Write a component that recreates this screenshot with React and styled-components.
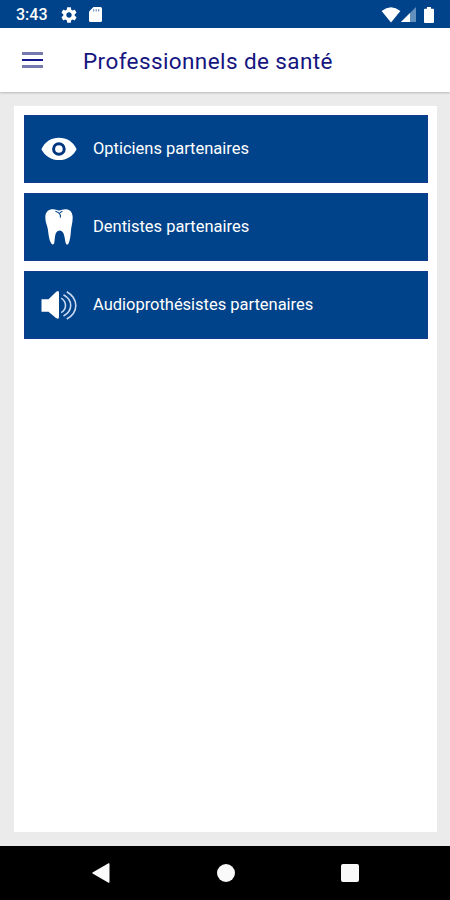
import React from 'react'
import styled, { createGlobalStyle } from 'styled-components'

const GlobalStyle = createGlobalStyle`
  * {
    box-sizing: border-box;
  }

  body {
    margin: 0;
    font-family: Roboto, "Liberation Sans", sans-serif;
  }
`

const GearIcon = () => (
  <svg width="16" height="16" viewBox="2 2 20 20" fill="#fff">
    <path d="M19.14 12.94c.04-.3.06-.61.06-.94 0-.32-.02-.64-.07-.94l2.03-1.58c.18-.14.23-.41.12-.61l-1.92-3.32c-.12-.22-.37-.29-.59-.22l-2.39.96c-.5-.38-1.03-.7-1.62-.94l-.36-2.54c-.04-.24-.24-.41-.48-.41h-3.84c-.24 0-.43.17-.47.41l-.36 2.54c-.59.24-1.13.57-1.62.94l-2.39-.96c-.22-.08-.47 0-.59.22L2.74 8.87c-.12.21-.08.47.12.61l2.03 1.58c-.05.3-.09.63-.09.94s.02.64.07.94l-2.03 1.58c-.18.14-.23.41-.12.61l1.92 3.32c.12.22.37.29.59.22l2.39-.96c.5.38 1.03.7 1.62.94l.36 2.54c.05.24.24.41.48.41h3.84c.24 0 .44-.17.47-.41l.36-2.54c.59-.24 1.13-.56 1.62-.94l2.39.96c.22.08.47 0 .59-.22l1.92-3.32c.12-.22.07-.47-.12-.61l-2.01-1.58zM12 15.4c-1.88 0-3.4-1.52-3.4-3.4s1.52-3.4 3.4-3.4 3.4 1.52 3.4 3.4-1.52 3.4-3.4 3.4z" />
  </svg>
)

const CardIcon = () => (
  <svg width="13" height="15" viewBox="0 0 13 15">
    <path d="M4.5 0H11.5Q13 0 13 1.5V13.5Q13 15 11.5 15H1.5Q0 15 0 13.5V4.5Z" fill="#fff" />
    <path d="M4.7 2.1V4.6M7.2 2.1V4.6M9.7 2.1V4.6" stroke="#5c86b5" strokeWidth="1" />
  </svg>
)

const WifiIcon = () => (
  <svg width="20" height="16" viewBox="0 0 20 16">
    <path d="M0.6 4Q10 -3.4 19.4 4L10 15.4Z" fill="#fff" />
  </svg>
)

const SignalIcon = () => (
  <svg width="15" height="15" viewBox="0 0 15 15">
    <path d="M15 0V15H0Z" fill="#6490bd" />
    <path d="M9 6V15H0Z" fill="#fff" />
  </svg>
)

const BatteryIcon = () => (
  <svg width="10" height="16" viewBox="0 0 10 16">
    <path d="M3 0H7V1.8H9Q10 1.8 10 2.8V15Q10 16 9 16H1Q0 16 0 15V2.8Q0 1.8 1 1.8H3Z" fill="#fff" />
  </svg>
)

const EyeIcon = () => (
  <svg width="36" height="36" viewBox="0 0 36 36">
    <path d="M0.4 18.2C4 10.5 10.5 6.8 18 6.8S32 10.5 35.6 18.2C32 25.4 25.5 29 18 29S4 25.4 0.4 18.2Z" fill="#fff" />
    <circle cx="17.9" cy="18" r="5.3" fill="#fff" stroke="#00367f" strokeWidth="3" />
  </svg>
)

const ToothIcon = () => (
  <svg width="36" height="36" viewBox="0 0 36 36">
    <path
      d="M4.3 8C4.5 2.5 8 0.2 12 0.3C14.5 0.3 16 1.5 18 1.5C20.5 1.3 22 0 25 0.2C29.5 0.5 31.7 4 31.7 8.5C31.7 14 30.3 17 30 21C29.6 26 29.2 31.5 27.3 35C26.5 36 25.2 35.6 24.7 34C23.5 29.5 23.7 22 18.8 21.4C13 21.6 14.3 30 13.2 34C12.7 35.7 11.4 36 10.5 34.7C8 31.2 7.6 25.5 6.8 20C6.2 16 4.2 13 4.3 8Z"
      fill="#fff"
    />
    <path d="M14.4 2.2C17.5 3.2 20.4 4.6 19.3 8.6M18.7 3.9L21.4 2.3" fill="none" stroke="#00438a" strokeWidth="1.1" />
  </svg>
)

const SpeakerIcon = () => (
  <svg width="36" height="36" viewBox="0 0 36 36">
    <path d="M0.5 12.2H7.5L15 5Q18 2.8 18 6V30Q18 33 15 31L7.5 24.7H0.5Z" fill="#fff" />
    <g fill="none" stroke="#c7d8f2" strokeWidth="1.6">
      <path d="M20.2 11.2Q24.5 14 24.5 18.4T20.2 25.6" />
      <path d="M22.5 7.8Q29.7 12 29.7 18.4T22.5 29" />
      <path d="M25.8 4.7Q34.8 10 34.8 18.4T25.8 32" />
    </g>
  </svg>
)

const BackIcon = () => (
  <svg width="18" height="20" viewBox="0 0 18 20">
    <path d="M0.5 9.5Q0 10 0.5 10.5L16.5 19.7Q17.5 20 17.5 19V1Q17.5 0 16.5 0.3Z" fill="#fafafa" />
  </svg>
)

const items = [
  { label: 'Opticiens partenaires', Icon: EyeIcon, spacing: '-0.02px' },
  { label: 'Dentistes partenaires', Icon: ToothIcon, spacing: '-0.02px' },
  { label: 'Audioprothésistes partenaires', Icon: SpeakerIcon, spacing: '-0.02px' },
]

export default function App() {
  return (
    <>
      <GlobalStyle />
      <Screen>
        <StatusBar>
          <Time>3:43</Time>
          <GearIcon />
          <CardIcon />
          <StatusRight>
            <WifiIcon />
            <SignalIcon />
            <BatteryIcon />
          </StatusRight>
        </StatusBar>

        <Header>
          <MenuButton aria-label="Menu">
            <MenuLine $color="#7679ae" />
            <MenuLine $color="#14148c" $thin />
            <MenuLine $color="#7679ae" />
          </MenuButton>
          <Title>Professionnels de santé</Title>
        </Header>

        <Content>
          <Panel>
            {items.map(({ label, Icon, spacing }) => (
              <Item key={label}>
                <Icon />
                <Label $spacing={spacing}>{label}</Label>
              </Item>
            ))}
          </Panel>
        </Content>

        <NavBar>
          <BackIcon />
          <Home />
          <Recent />
        </NavBar>
      </Screen>
    </>
  )
}

const Screen = styled.div`
  width: 450px;
  height: 900px;
  display: flex;
  flex-direction: column;
  overflow: hidden;
  background: #ebebeb;
`

const StatusBar = styled.div`
  height: 28px;
  display: flex;
  align-items: center;
  padding: 1px 16px 0 16px;
  background: #00438a;

  svg {
    flex: none;
  }

  svg + svg {
    margin-left: 12px;
  }
`

const Time = styled.span`
  width: 45px;
  color: #fff;
  font-size: 16px;
  font-weight: 500;
  line-height: 20px;
`

const StatusRight = styled.div`
  display: flex;
  align-items: center;
  margin-left: auto;

  svg + svg {
    margin-left: 0;
  }

  svg:last-child {
    margin-left: 8px;
  }
`

const Header = styled.header`
  height: 64px;
  flex: none;
  display: flex;
  align-items: center;
  padding: 2px 22px 0;
  background: #fff;
  box-shadow: 0 1px 2px rgba(0, 0, 0, 0.22);
`

const MenuButton = styled.button`
  width: 21px;
  height: 16px;
  display: flex;
  flex-direction: column;
  justify-content: space-between;
  margin: -3px 40px 0 0;
  padding: 0;
  border: 0;
  background: none;
`

const MenuLine = styled.span`
  width: 100%;
  height: ${({ $thin }) => ($thin ? 2 : 3)}px;
  background: ${({ $color }) => $color};
`

const Title = styled.h1`
  margin: 0;
  color: #15157f;
  font-size: 22.5px;
  font-weight: 400;
  line-height: 30px;
  letter-spacing: 0.4px;
  white-space: nowrap;
`

const Content = styled.main`
  flex: 1;
  display: flex;
  padding: 14px 13px 14px 14px;
`

const Panel = styled.div`
  flex: 1;
  display: flex;
  flex-direction: column;
  gap: 10px;
  padding: 9px 9.5px;
  background: #fff;
`

const Item = styled.div`
  height: 68px;
  display: flex;
  align-items: center;
  gap: 16px;
  padding: 0 16.5px;
  border: 1px solid #123a91;
  background: #00438a;

  svg {
    flex: none;
  }
`

const Label = styled.span`
  color: #fff;
  font-size: 16.5px;
  line-height: 20px;
  letter-spacing: ${({ $spacing }) => $spacing};
  white-space: nowrap;
`

const NavBar = styled.nav`
  height: 54px;
  flex: none;
  display: flex;
  align-items: center;
  justify-content: space-between;
  padding: 0 91px 0 92px;
  background: #000;
`

const Home = styled.span`
  width: 18px;
  height: 18px;
  border-radius: 50%;
  background: #fafafa;
`

const Recent = styled.span`
  width: 18px;
  height: 18px;
  border-radius: 2px;
  background: #fafafa;
`
